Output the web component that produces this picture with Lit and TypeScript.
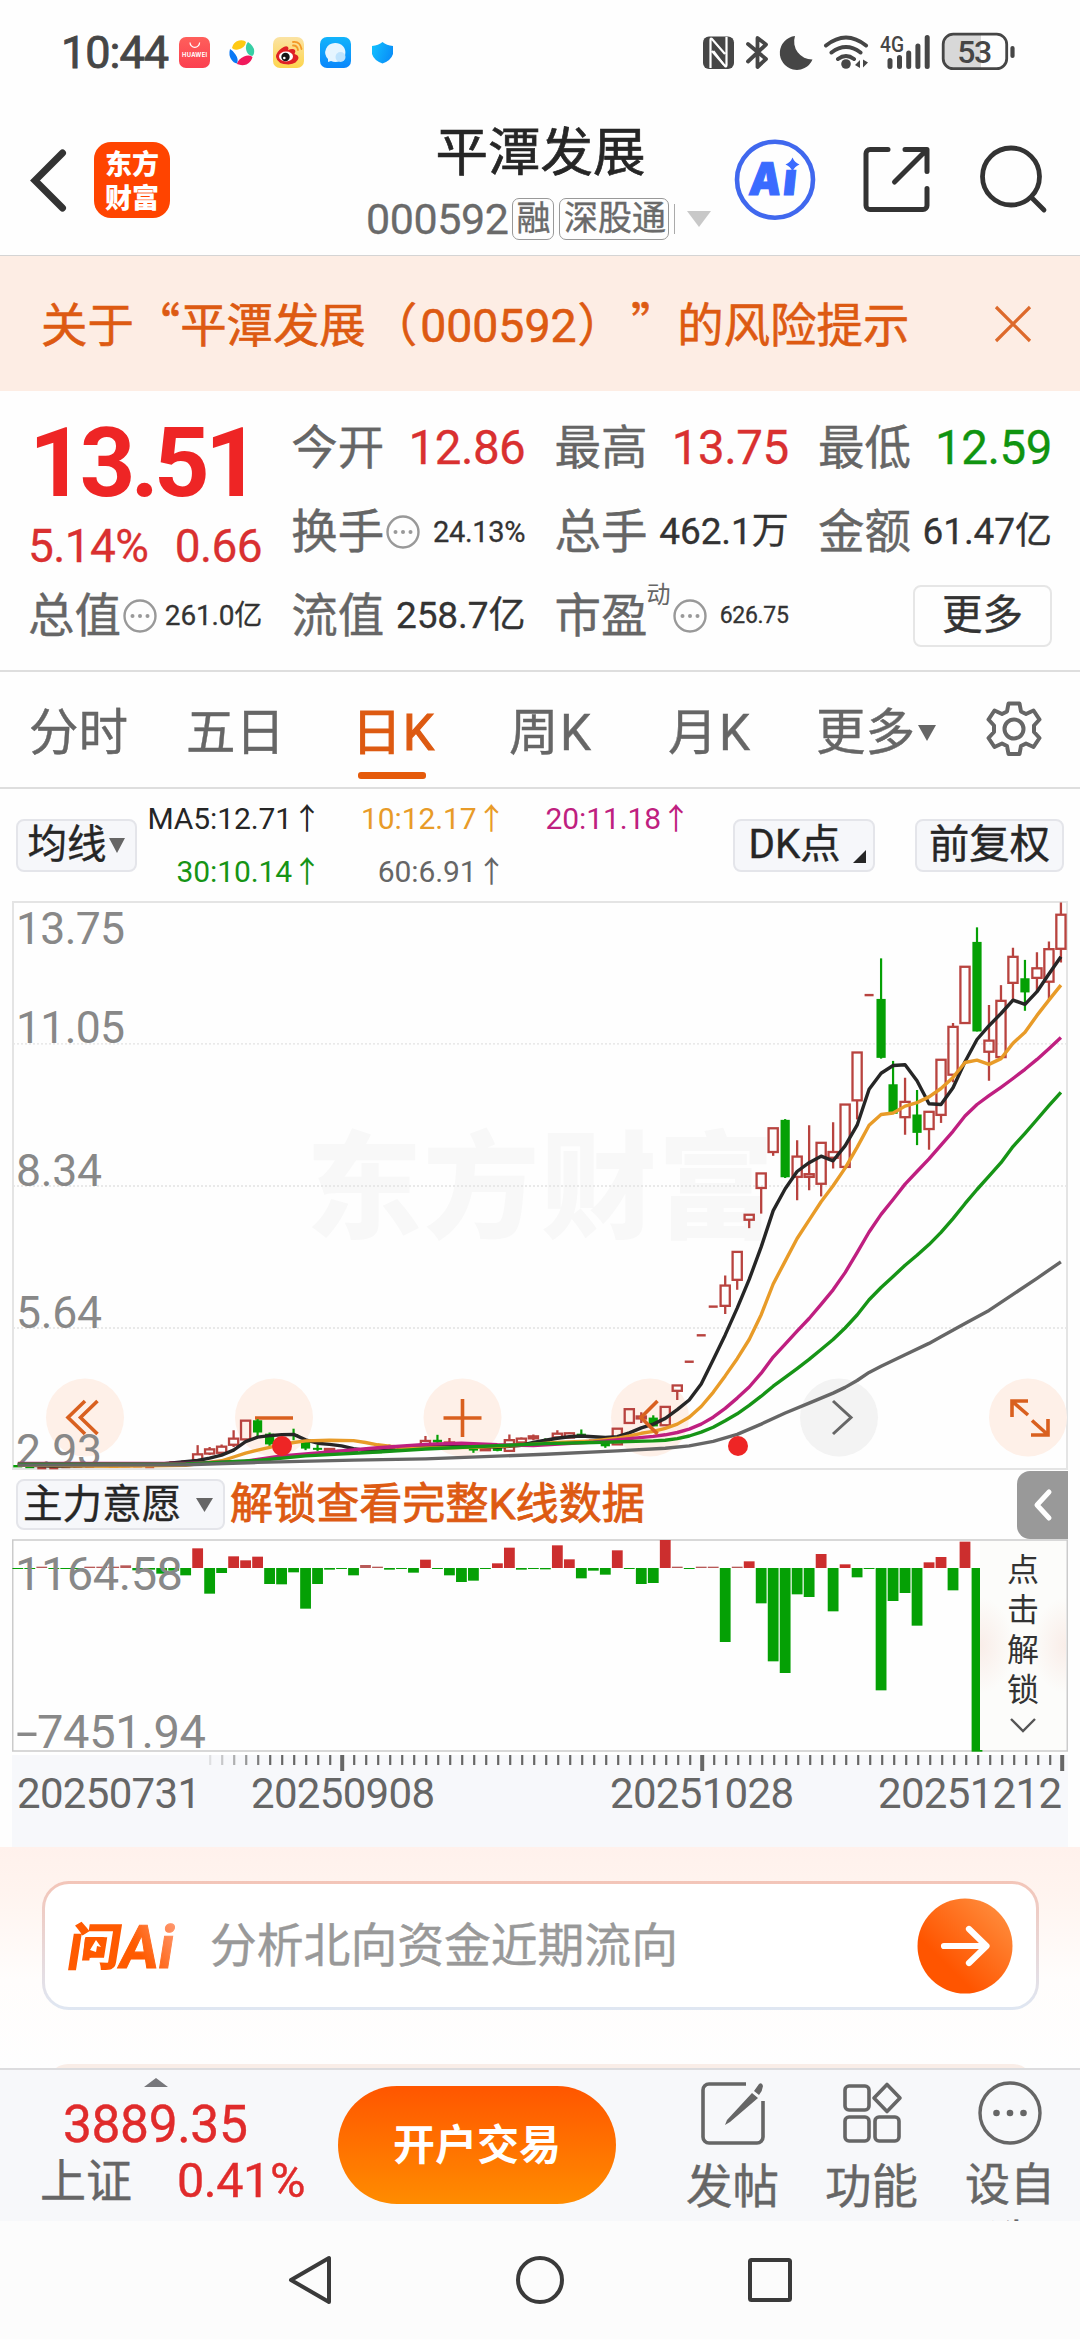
import { LitElement, html, svg, css } from "lit";
import { customElement } from "lit/decorators.js";

const FONT = css`Roboto, "Noto Sans CJK SC", sans-serif`;

/* ---------- chart data ---------- */
// Candles: [kind, high, bodyTop, bodyBottom, low]; r = rising, g = falling, d / e = flat.
type Candle = [string, number, number, number, number];
const flat = (v: number): Candle => ["d", v, v, v, v];
const flatG = (v: number): Candle => ["e", v, v, v, v];

const CANDLES: Candle[] = [
  flatG(1503), flatG(1505), flat(1508), flat(1508), flat(1505), flat(1504), flat(1504), flatG(1502),
  flat(1504), flat(1503), flat(1503), flat(1505), flat(1496), flat(1493), flat(1491),
  ["r", 1448, 1472, 1487, 1487], ["r", 1453, 1459, 1470, 1474], ["r", 1446, 1452, 1468, 1470],
  ["r", 1409, 1431, 1447, 1453], ["r", 1384, 1384, 1433, 1433], ["g", 1380, 1383, 1415, 1427],
  ["g", 1415, 1418, 1446, 1450], flat(1445), ["g", 1405, 1419, 1421, 1435],
  ["g", 1433, 1439, 1457, 1461], ["g", 1447, 1455, 1457, 1463], ["r", 1456, 1458, 1463, 1468],
  flat(1463), flatG(1465), flatG(1468), flatG(1466), ["r", 1446, 1456, 1461, 1462],
  flat(1457), flat(1452), ["r", 1424, 1437, 1446, 1446], ["g", 1421, 1434, 1441, 1443],
  ["r", 1429, 1441, 1444, 1446], flat(1446), ["g", 1455, 1457, 1460, 1468],
  ["r", 1455, 1456, 1461, 1462], ["g", 1452, 1453, 1463, 1464], ["r", 1420, 1435, 1463, 1466],
  ["r", 1428, 1431, 1441, 1446], ["r", 1420, 1425, 1430, 1435], ["g", 1430, 1434, 1439, 1441],
  ["r", 1409, 1418, 1428, 1430], ["r", 1415, 1417, 1428, 1430], ["g", 1407, 1418, 1421, 1424],
  flat(1436), ["g", 1439, 1441, 1451, 1455], ["r", 1405, 1405, 1446, 1446],
  ["r", 1354, 1354, 1390, 1390], ["r", 1362, 1373, 1378, 1390], ["g", 1370, 1376, 1399, 1399],
  ["r", 1348, 1348, 1396, 1396], ["r", 1292, 1292, 1306, 1330], flat(1230), flat(1161), flat(1086),
  ["r", 1005, 1031, 1084, 1105], ["r", 943, 943, 1016, 1042], ["r", 846, 846, 859, 881],
  ["r", 738, 738, 776, 843], ["r", 620, 620, 682, 692], ["g", 596, 598, 748, 750],
  ["r", 651, 694, 747, 808], ["r", 612, 740, 747, 782], ["r", 658, 658, 765, 798],
  ["r", 604, 682, 697, 725], ["r", 558, 558, 721, 721], ["r", 422, 422, 547, 597], flat(272),
  ["g", 176, 282, 436, 438], ["g", 444, 505, 582, 582], ["r", 488, 551, 591, 637],
  ["g", 520, 584, 632, 664], ["r", 577, 577, 622, 676], ["r", 441, 441, 585, 606],
  ["r", 345, 355, 480, 500], ["r", 198, 198, 345, 345], ["g", 95, 133, 367, 367],
  ["r", 298, 391, 420, 496], ["r", 246, 287, 434, 434], ["r", 148, 172, 240, 285],
  ["g", 180, 228, 265, 313], ["r", 160, 202, 227, 262], ["r", 132, 152, 237, 285],
  ["r", 30, 62, 151, 187],
];

// Moving averages: a sparse head of [index, value] pairs, then one value per candle from `from`.
interface Average { color: string; head: [number, number][]; from: number; tail: number[]; }
const AVERAGES: Average[] = [
  { color: "#262626", head: [[0, 1499], [3, 1503], [8, 1501], [12, 1497], [15, 1488]], from: 16,
    tail: [1482, 1474, 1461, 1439, 1427, 1423, 1421, 1420, 1434, 1443, 1446, 1450, 1457, 1462, 1463, 1462,
      1460, 1455, 1450, 1449, 1449, 1450, 1451, 1452, 1453, 1451, 1448, 1441, 1435, 1430, 1426, 1424, 1426,
      1428, 1426, 1416, 1403, 1393, 1378, 1355, 1330, 1288, 1225, 1160, 1090, 1015, 930, 835, 778, 733,
      710, 693, 705, 666, 612, 518, 476, 456, 454, 496, 556, 558, 514, 446, 388, 352, 320, 285, 296,
      263, 217, 172] },
  { color: "#e89b28", head: [[0, 1500], [8, 1503], [14, 1501], [17, 1489], [18, 1479], [19, 1469], [20, 1461],
      [21, 1454], [22, 1447], [23, 1441], [24, 1437], [26, 1435], [28, 1436], [29, 1441], [30, 1447],
      [31, 1451], [33, 1456], [38, 1454], [42, 1448], [45, 1441], [48, 1437], [50, 1430]], from: 51,
    tail: [1424, 1417, 1412, 1404, 1393, 1375, 1347, 1310, 1267, 1222, 1172, 1107, 1027, 967, 908, 860, 812,
      770, 724, 670, 612, 584, 580, 562, 553, 538, 516, 487, 448, 442, 453, 438, 398, 369, 325, 285, 246] },
  { color: "#bf1f80", head: [[0, 1496], [14, 1496], [19, 1490], [22, 1476], [26, 1466], [30, 1455], [34, 1446],
      [37, 1443], [40, 1447], [43, 1449], [48, 1440], [51, 1431]], from: 53,
    tail: [1425, 1421, 1415, 1406, 1393, 1375, 1352, 1325, 1296, 1260, 1218, 1184, 1150, 1117, 1080, 1042,
      997, 945, 891, 845, 806, 766, 733, 700, 664, 628, 588, 558, 535, 513, 490, 466, 440, 412, 383] },
  { color: "#169416", head: [[0, 1498], [14, 1497], [20, 1488], [24, 1476], [30, 1466], [34, 1458], [38, 1452],
      [44, 1444], [48, 1441]], from: 53,
    tail: [1437, 1435, 1431, 1424, 1414, 1401, 1384, 1366, 1344, 1320, 1294, 1271, 1248, 1224, 1198, 1172,
      1142, 1108, 1068, 1036, 1007, 978, 952, 924, 892, 856, 817, 780, 745, 710, 668, 633, 597, 561, 526] },
  { color: "#666666", head: [[0, 1500], [14, 1499], [20, 1493], [28, 1487], [34, 1484], [44, 1472], [50, 1463],
      [54, 1456], [56, 1450], [58, 1438], [60, 1420], [62, 1393], [64, 1364], [66, 1338], [68, 1312],
      [69, 1297], [70, 1279], [71, 1258], [72, 1242], [74, 1212], [76, 1182], [77, 1165], [79, 1130],
      [81, 1096], [83, 1054], [85, 1012], [87, 969]], from: 88, tail: [] },
];

const FLOWS = [
  -3, -3, 4, -2, -2, -2, 4, 4, 4, 8, -7, -5, -17, -8, -22, 59, -77, -15, 35, 23, 34, -48, -49, -13, -122,
  -48, -5, -2, -22, 9, 4, -5, -2, -14, 25, -3, -22, -42, -38, -3, 14, 61, -5, -2, -4, 68, 26, -31, -8,
  -20, 53, -3, -48, -45, 84, 4, -3, 4, 4, -222, 4, 20, -106, -280, -315, -79, -87, 42, -130, 11, -28, -3,
  -367, -99, -75, -173, 17, 33, -67, 79, -551,
];

const STEP = 11.99;
const cx = (i: number) => 5.8 + i * STEP;
const cy = (v: number) => v / 2.613 - 10;

const RED = "#b8433f";
const GREEN = "#05a005";

function candle([kind, hi, top, bottom, lo]: Candle, i: number) {
  const x = cx(i);
  if (kind === "d" || kind === "e") {
    return svg`<rect x=${x - 4.5} y=${cy(hi) - 1.2} width="9" height="2.4" fill=${kind === "d" ? RED : GREEN} />`;
  }
  if (kind === "g") {
    return svg`<rect x=${x - 1.1} y=${cy(hi)} width="2.2" height=${cy(lo) - cy(hi)} fill=${GREEN} />
      <rect x=${x - 4.6} y=${cy(top)} width="9.2" height=${Math.max(2, cy(bottom) - cy(top))} fill=${GREEN} />`;
  }
  return svg`<path d="M${x} ${cy(hi)}V${cy(top)}M${x} ${cy(bottom)}V${cy(lo)}" stroke=${RED} stroke-width="2.3" />
    <rect x=${x - 4.6} y=${cy(top)} width="9.2" height=${Math.max(2, cy(bottom) - cy(top))}
      fill="none" stroke=${RED} stroke-width="2.3" />`;
}

function averagePoints(a: Average) {
  const pts = [...a.head, ...a.tail.map((v, k) => [a.from + k, v] as [number, number])];
  return pts.map(([i, v]) => `${cx(i).toFixed(1)},${cy(v).toFixed(1)}`).join(" ");
}

/* ---------- status bar ---------- */
@customElement("status-bar")
class StatusBar extends LitElement {
  static styles = css`
    :host { display: flex; height: 100px; align-items: flex-start; padding: 0 62px 0 61px; font-family: ${FONT}; color: #464646; }
    .time { font-size: 45px; line-height: 46px; margin-top: 30px; width: 118px; letter-spacing: -1px; font-weight: 400; -webkit-text-stroke: 0.9px #464646; }
    .apps { margin-top: 36px; display: block; }
    .system { margin: 30px 0 0 auto; display: block; }
    .bold { font-family: ${FONT}; font-weight: 500; }
    .brand { font-family: Inter, sans-serif; font-weight: 700; }
  `;
  render() {
    return html`
      <div class="time">10:44</div>
      <svg class="apps" width="220" height="34" viewBox="179 36 220 34">
        <defs>
          <linearGradient id="msg" x1="0" y1="0" x2="0" y2="1"><stop offset="0" stop-color="#12b4fb" /><stop offset="1" stop-color="#0a86fb" /></linearGradient>
          <linearGradient id="wb" x1="0" y1="0" x2="0" y2="1"><stop offset="0" stop-color="#fbe3a4" /><stop offset="1" stop-color="#fdd54d" /></linearGradient>
          <linearGradient id="sh" x1="0" y1="0" x2="1" y2="0.4"><stop offset="0" stop-color="#12c3ff" /><stop offset="1" stop-color="#0a90f8" /></linearGradient>
          <linearGradient id="hw" x1="0" y1="0" x2="0" y2="1"><stop offset="0" stop-color="#ff5f5b" /><stop offset="1" stop-color="#fb4050" /></linearGradient>
        </defs>
        <rect x="179" y="37" width="31" height="31" rx="7" fill="url(#hw)" />
        <path d="M190 42.500a4.800 4.800 0 0 0 9.600 0" fill="none" stroke="#fff" stroke-width="1.200" />
        <text class="brand" x="194.600" y="57" text-anchor="middle" font-size="5.800" fill="#fff" textLength="25">HUAWEI</text>
        <path d="M232 48q1-6 7-7.500 5-1 7 1.500-1 6-8 7.500-4 1-6-1.500z" fill="#ffc913" />
        <path d="M248 42q6 4 6.200 9 0 4-2 5-5-1-6-6-1-5 1.800-8z" fill="#37cfa5" />
        <path d="M252.500 57q-1 5-6 7.500-5 1.500-9.500-.5 1-5 7-7.500 5-2 8.500.5z" fill="#f01a5c" />
        <path d="M230 49q-1.500 6 1 10 2.500 4 6 4.500 2-4-1.500-9-2.500-4-5.500-5.500z" fill="#0a78f5" />
        <rect x="273" y="37" width="31" height="31" rx="7" fill="url(#wb)" />
        <path d="M276 57q0-5 6-9 4-3 6-1 1 1.500 0 3 5-2 7 0 1 1-.5 4 4 1 4 4-1 5.500-10 6.500-11 0-12.500-7.500z" fill="#df2024" />
        <ellipse cx="286" cy="56.500" rx="7" ry="5" fill="#fff" /><circle cx="285.500" cy="57" r="4.200" fill="#161616" /><circle cx="284.300" cy="58" r="1.300" fill="#fff" />
        <path d="M293 42q7-1 8.500 7M293 45.500q4.200-.2 5 4.500" fill="none" stroke="#f39a28" stroke-width="1.800" stroke-linecap="round" />
        <rect x="320" y="37" width="31" height="31" rx="7" fill="url(#msg)" />
        <path d="M335 43a10 9.500 0 1 1-4 18l-3 1v-3a10 9.500 0 0 1 7-16z" fill="#e6f5ff" />
        <circle cx="340.500" cy="57" r="5" fill="#bfe3fd" />
        <path d="M382.500 42q4 3.500 10.500 4v8q-2 6.500-10.500 9.500-8.500-3-10.500-9.500v-8q6.500-.5 10.500-4z" fill="url(#sh)" />
      </svg>
      <svg class="system" width="315" height="44" viewBox="703 30 315 44" fill="none">
        <rect x="703" y="36.500" width="31" height="32.500" rx="6" fill="#464646" />
        <path d="M710.500 68V40q0-2 1.500-1l13 15M726.500 37v28q0 2-1.500 1l-13-15" stroke="#fff" stroke-width="2.200" />
        <path d="M713.500 51l10.500 14" stroke="#fff" stroke-width="2" />
        <path d="M748 44l18 15-8.500 8V38l8.500 6.500L748 61.500" stroke="#464646" stroke-width="3.800" stroke-linejoin="round" stroke-linecap="round" />
        <path d="M795 36a17 17 0 1 0 17.500 23.500A18 18 0 0 1 795 36z" fill="#464646" />
        <path d="M826 45.500q20-16 40 0M831.500 52.500q14.500-11 29 0M838 59q8-6 16 0" stroke="#464646" stroke-width="4" stroke-linecap="round" />
        <circle cx="846" cy="64" r="4.800" fill="#464646" />
        <path d="M855 65l5-5v8zM868 62.500l-5 5v-8z" fill="#464646" />
        <text class="bold" x="880" y="51.500" font-size="22" fill="#464646" textLength="24" lengthAdjust="spacingAndGlyphs">4G</text>
        <path d="M890 60.500v6M899.500 57.500v9M908.700 53v13.500M917.900 46v20.500M927.200 37.500v29" stroke="#464646" stroke-width="5" stroke-linecap="round" />
        <path d="M950 35h31v33h-31a6 6 0 0 1-6-6V41a6 6 0 0 1 6-6z" fill="#d8d8d8" />
        <rect x="943.200" y="34.200" width="63.500" height="34.500" rx="10" stroke="#464646" stroke-width="2.800" />
        <path d="M1012.500 48v8" stroke="#464646" stroke-width="4.200" stroke-linecap="round" />
        <text class="bold" x="974.700" y="63" text-anchor="middle" font-size="32" fill="#464646" textLength="35" lengthAdjust="spacing">53</text>
      </svg>`;
  }
}

/* ---------- title bar ---------- */
@customElement("stock-header")
class StockHeader extends LitElement {
  static styles = css`
    :host { display: grid; grid-template-columns: 367px 345px 368px; height: 155px; border-bottom: 1px solid #d4d4d4; font-family: ${FONT}; }
    .left { display: flex; padding: 42px 0 0 29px; align-items: flex-start; }
    .back { display: block; margin-top: 4px; }
    .logo { width: 76px; height: 76px; border-radius: 17px; background: #ff4400; margin-left: 25px; color: #fff; font: 900 27px/34px "Noto Sans CJK SC", sans-serif; display: flex; flex-direction: column; align-items: center; justify-content: center; }
    .center { display: flex; flex-direction: column; }
    .name { font-size: 52.500px; line-height: 60px; margin-top: 23px; text-align: center; color: #262626; -webkit-text-stroke: 0.7px #262626; padding-left: 2px; }
    .sub { display: flex; align-items: center; height: 45px; margin-top: 13px; color: #6a6a6a; }
    .code { font-size: 43px; line-height: 44px; width: 145px; letter-spacing: -0.4px; margin-left: -1px; margin-right: 1px; -webkit-text-stroke: 0.3px #6a6a6a; }
    .badge { box-sizing: border-box; height: 42px; border: 1.500px solid #999; border-radius: 7px; font-size: 34px; line-height: 38px; text-align: center; white-space: nowrap; -webkit-text-stroke: 0.4px #6a6a6a; }
    .one { width: 42px; padding-left: 1px; }
    .three { width: 110px; margin-left: 5px; padding-left: 2px; }
    .rule { width: 1px; height: 30px; background: #aaa; margin: 0 11px 0 5px; }
    .right { display: block; }
    .ai { font-family: Inter, sans-serif; font-weight: 900; }
  `;
  render() {
    return html`
      <div class="left">
        <svg class="back" width="40" height="68" viewBox="0 0 40 68" fill="none"><path d="M33.500 7L6 34.500 33.500 62" stroke="#333" stroke-width="7" stroke-linecap="round" /></svg>
        <div class="logo"><span>东方</span><span>财富</span></div>
      </div>
      <div class="center">
        <div class="name">平潭发展</div>
        <div class="sub">
          <span class="code">000592</span><span class="badge one">融</span><span class="badge three">深股通</span>
          <span class="rule"></span>
          <svg width="26" height="18" viewBox="0 0 26 18"><path d="M1 1h24L13 17z" fill="#c8c8c8" /></svg>
        </div>
      </div>
      <svg class="right" width="368" height="155" viewBox="712 100 368 155" fill="none">
        <circle cx="775" cy="179.700" r="38" stroke="#4068ee" stroke-width="4.600" />
        <g transform="translate(0 194.500) skewX(-6)">
          <text class="ai" y="0" font-size="45" fill="#3a6bff" stroke="#3a6bff" stroke-width="1.200"><tspan x="748" textLength="32" lengthAdjust="spacingAndGlyphs">A</tspan><tspan x="782">ı</tspan></text>
        </g>
        <path d="M792.500 157.500q2 5 7 7-5 2-7 7-2-5-7-7 5-2 7-7z" fill="#3a6bff" />
        <path d="M888 149.500h-18a4 4 0 0 0-4 4v52a4 4 0 0 0 4 4h53a4 4 0 0 0 4-4V188.500M905 149.500h22v22M894.500 182l31-31" stroke="#333" stroke-width="5" stroke-linecap="round" stroke-linejoin="round" />
        <circle cx="1011" cy="176.500" r="28.500" stroke="#333" stroke-width="4.800" />
        <path d="M1031.500 197.500l12.500 12.500" stroke="#333" stroke-width="4.800" stroke-linecap="round" />
      </svg>`;
  }
}

/* ---------- risk notice ---------- */
@customElement("risk-notice")
class RiskNotice extends LitElement {
  static styles = css`
    :host { display: flex; align-items: center; justify-content: space-between; box-sizing: border-box; height: 135px; padding: 0 48px 0 41px; background: #fdede4; color: #dd5a12; font: 46.400px/60px ${FONT}; }
    .wide { font-family: "Noto Sans CJK SC", sans-serif; }
    .close { margin-left: 7px; }
    .code { margin: 0 1px 0 3px; }
    .paren { margin-left: 5px; }
    .text { white-space: nowrap; text-spacing-trim: space-all; -webkit-text-stroke: 0.6px #dd5a12; }
  `;
  render() {
    return html`
      <div class="text">关于<span class="wide">“</span>平潭发展<span class="paren">（</span><span class="code">000592</span>）<span class="wide close">”</span>的风险提示</div>
      <svg width="38" height="38" viewBox="0 0 38 38"><path d="M2 2l34 34M36 2L2 36" stroke="#dd6a2c" stroke-width="3.200" /></svg>`;
  }
}

/* ---------- quote ---------- */
@customElement("quote-panel")
class QuotePanel extends LitElement {
  static styles = css`
    :host { display: grid; box-sizing: border-box; height: 281px; grid-template-columns: repeat(4, 234px); column-gap: 29.300px; grid-template-rows: repeat(3, 84px); padding: 14px 28px 0; border-bottom: 2px solid #dedede; font: 46.500px/50px ${FONT}; color: #333; white-space: nowrap; }
    .last { grid-row: span 2; color: #ee2525; }
    .price { font-weight: 700; font-size: 97px; line-height: 100px; letter-spacing: -4.800px; margin: 8px 0 0 1px; }
    .change { display: flex; justify-content: space-between; font-size: 46px; line-height: 50px; margin-top: 8px; color: #d93030; letter-spacing: -0.600px; -webkit-text-stroke: 0.3px #d93030; }
    .cell { display: flex; align-items: center; padding-top: 1px; }
    .label { color: #666; -webkit-text-stroke: 0.4px #666; }
    .value { margin-left: auto; -webkit-text-stroke: 0.3px currentColor; }
    .info { display: block; margin-left: 2px; }
    .sup { align-self: flex-start; font-size: 24px; line-height: 24px; margin: 9px 0 0 -1px; color: #666; }
    .up { color: #d93030; } .down { color: #109410; }
    .s48 { font-size: 47.500px; letter-spacing: -0.500px; } .s37 { font-size: 37px; letter-spacing: -0.100px; } .s29 { font-size: 29px; letter-spacing: -0.300px; } .s28 { font-size: 28px; letter-spacing: -0.200px; } .s23 { font-size: 23px; letter-spacing: -0.300px; }
    .more { box-sizing: border-box; margin-left: auto; width: 139px; height: 62px; border: 2px solid #e6e6e6; border-radius: 8px; text-align: center; font-size: 40.500px; line-height: 56px; -webkit-text-stroke: 0.4px #333; }
  `;
  private info() {
    return html`<svg class="info" width="34" height="34" viewBox="0 0 34 34"><circle cx="17" cy="17" r="15.500" fill="none" stroke="#999" stroke-width="2.400" /><g fill="#999"><circle cx="9.500" cy="17" r="2" /><circle cx="17" cy="17" r="2" /><circle cx="24.500" cy="17" r="2" /></g></svg>`;
  }
  render() {
    const cell = (label: string, value: string, cls: string, info = false) => html`
      <div class="cell"><span class="label">${label}</span>${info ? this.info() : ""}<span class="value ${cls}">${value}</span></div>`;
    return html`
      <div class="last"><div class="price">13.51</div><div class="change"><span>5.14%</span><span>0.66</span></div></div>
      ${cell("今开", "12.86", "s48 up")}${cell("最高", "13.75", "s48 up")}${cell("最低", "12.59", "s48 down")}
      ${cell("换手", "24.13%", "s29", true)}${cell("总手", "462.1万", "s37")}${cell("金额", "61.47亿", "s37")}
      ${cell("总值", "261.0亿", "s28", true)}${cell("流值", "258.7亿", "s37")}
      <div class="cell"><span class="label">市盈</span><span class="sup">动</span>${this.info()}<span class="value s23">626.75</span></div>
      <div class="cell"><div class="more">更多</div></div>`;
  }
}

/* ---------- period tabs ---------- */
@customElement("period-tabs")
class PeriodTabs extends LitElement {
  static styles = css`
    :host { display: grid; box-sizing: border-box; height: 117px; grid-template-columns: 157px 166px 157px 159px 148px 169px 60px; padding-left: 29px; border-bottom: 2px solid #dedede; font: 49.500px/60px ${FONT}; color: #666; white-space: nowrap; -webkit-text-stroke: 0.4px #666; }
    .tab { padding-top: 31px; }
    .k { letter-spacing: 1.500px; }
    .active { color: #dd5a12; -webkit-text-stroke: 1.200px #dd5a12; }
    .active::after { content: ""; display: block; width: 68px; height: 7px; border-radius: 3px; background: #e55a0a; margin: 9px 0 0 6px; }
    .more { display: flex; align-items: center; padding-bottom: 26px; }
    .gear { display: block; margin-top: 27px; }
  `;
  render() {
    const teeth = "M23.500 3h11l1.500 8 5 2.500 7.500-3.500 6 9-5.500 6v6.500l5.500 6-6 9-7.500-3.500-5 2.500-1.500 8h-11l-1.500-8-5-2.500-7.500 3.500-6-9 5.500-6V25l-5.500-6 6-9 7.500 3.500 5-2.500z";
    return html`
      <div class="tab">分时</div><div class="tab">五日</div><div class="tab k active">日K</div><div class="tab k">周K</div><div class="tab k">月K</div>
      <div class="tab more">更多<svg width="22" height="18" viewBox="-2 -1 22 18"><path d="M1 0h18L10 16z" fill="#666" /></svg></div>
      <svg class="gear" width="58" height="60" viewBox="0 0 58 60" fill="none" stroke="#666" stroke-width="4"><path d=${teeth} stroke-linejoin="round" transform="translate(0 1.500)" /><circle cx="29" cy="30" r="9.500" /></svg>`;
  }
}

/* ---------- indicator toolbar ---------- */
@customElement("indicator-bar")
class IndicatorBar extends LitElement {
  static styles = css`
    :host { display: flex; height: 112px; font: 40.300px/50px ${FONT}; color: #262626; white-space: nowrap; }
    .btn { box-sizing: border-box; height: 53px; margin-top: 30px; border: 2px solid #e4e5ea; border-radius: 8px; background: #f6f7fa; display: flex; align-items: center; justify-content: center; line-height: 46px; flex: none; -webkit-text-stroke: 0.4px #262626; padding-bottom: 2px; }
    .ma { width: 121px; margin-left: 16px; font-size: 39.500px; }
    .ma svg { margin: 2px 0 0 1px; }
    .legend { display: grid; grid-template-columns: 185px 184.500px 184.500px; grid-template-rows: 53px 53px; padding-top: 3px; font-size: 30px; line-height: 53px; text-align: right; letter-spacing: -0.100px; }
    .dk { width: 142px; margin-left: 42px; }
    .dk svg { margin: 24px -6px 0 12px; }
    .fq { width: 149px; margin-left: 40px; }
    .c5 { color: #262626; } .c10 { color: #e89b28; } .c20 { color: #bf1f80; } .c30 { color: #169416; } .c60 { color: #666; }
  `;
  render() {
    return html`
      <div class="btn ma">均线<svg width="18" height="16" viewBox="0 0 18 16"><path d="M1 0h16L9 15z" fill="#666" /></svg></div>
      <div class="legend">
        <span class="c5">MA5:12.71↑</span><span class="c10">10:12.17↑</span><span class="c20">20:11.18↑</span>
        <span class="c30">30:10.14↑</span><span class="c60">60:6.91↑</span>
      </div>
      <div class="btn dk">DK点<svg width="13" height="13" viewBox="0 0 13 13"><path d="M13 0v13H0z" fill="#262626" /></svg></div>
      <div class="btn fq">前复权</div>`;
  }
}

/* ---------- candlestick chart ---------- */
@customElement("k-chart")
class KChart extends LitElement {
  static styles = css`
    :host { display: block; height: 569px; padding: 0 12px; }
    .canvas { display: block; }
    .axis { font: 44.500px ${FONT}; fill: #888; }
    .mark { font: 900 116px "Noto Sans CJK SC", sans-serif; fill: #f8f8f8; }
  `;
  render() {
    const labels: [string, number][] = [["13.75", 43], ["11.05", 142], ["8.34", 284.5], ["5.64", 426.5], ["2.93", 564.5]];
    const buttons: [number, string][] = [[73, "#fef0e8"], [262, "#fef0e8"], [450.5, "#fef0e8"], [638, "#fef0e8"], [827, "#f3f3f3"], [1016, "#fef0e8"]];
    return html`<svg class="canvas" width="1056" height="569" viewBox="0 0 1056 569" fill="none">
      <text class="mark" x="294" y="328" textLength="468">东方财富</text>
      ${[142.8, 285, 427].map((y) => svg`<path d="M1 ${y}H1055" stroke="#e2e2e2" stroke-width="1.300" stroke-dasharray="2 2" />`)}
      <rect x="1" y="1" width="1054" height="567" stroke="#e4e4e4" stroke-width="2" />
      ${buttons.map(([x, c]) => svg`<circle cx=${x} cy="516.500" r="39" fill=${c} />`)}
      <g stroke="#d9601f" stroke-width="3.600">
        <path d="M73 500L56 516.500l17 16.500M85.500 500L68.500 516.500l17 16.500" />
        <path d="M243 517h38M431.500 517h38M450.500 498v38" />
        <path d="M1000 516v-16h16M1001 501l15 13M1036 518v16h-17M1035 533l-15-13.500" />
      </g>
      ${CANDLES.map(candle)}
      ${labels.map(([t, y]) => svg`<text class="axis" x="4" y=${y} textLength=${t.length === 5 ? 109 : 86}>${t}</text>`)}
      ${AVERAGES.map((a) => svg`<polyline points=${averagePoints(a)} stroke=${a.color} stroke-width="3.400" stroke-linejoin="round" />`)}
      <path d="M645.500 500L629 516.500l16.500 16.500" stroke="#d9601f" stroke-width="3.600" />
      <path d="M821 500l18 16.500-18 16.500" stroke="#666" stroke-width="3" />
      <circle cx="270" cy="545" r="10" fill="#ee2525" /><circle cx="726" cy="545" r="10" fill="#ee2525" />
    </svg>`;
  }
}

/* ---------- fund flow chart ---------- */
@customElement("flow-chart")
class FlowChart extends LitElement {
  static styles = css`
    :host { display: block; padding: 0 12px; font-family: ${FONT}; }
    .bar { display: flex; height: 69px; align-items: center; padding-left: 4px; }
    .pick { box-sizing: border-box; width: 209px; height: 51px; border: 2px solid #e4e5ea; border-radius: 8px; background: #f6f7fa; display: flex; align-items: center; justify-content: space-between; padding: 0 9px 0 5px; font-size: 39.600px; line-height: 46px; color: #262626; -webkit-text-stroke: 0.4px #262626; }
    .unlock { font-size: 43.100px; line-height: 50px; color: #dd5a12; margin-left: 5px; -webkit-text-stroke: 0.8px #dd5a12; }
    .fold { width: 51px; height: 68px; margin-left: auto; background: #999; border-radius: 13px 0 0 13px; display: flex; align-items: center; justify-content: center; }
    .canvas { display: block; }
    .axis { font: 47px ${FONT}; fill: #888; }
    .plot { display: grid; grid-template-columns: 968px 88px; height: 213px; }
    .plot > * { grid-row: 1; }
    .canvas { grid-column: 1 / 3; }
    .gate { grid-column: 2; margin: 2px 2px 2px 0; padding-top: 9px; box-sizing: border-box; display: flex; flex-direction: column; align-items: center; font-size: 32px; line-height: 40px; color: #333; position: relative;
      background: radial-gradient(ellipse 34px 48px at 0% 50%, #f9ede8, transparent), radial-gradient(ellipse 34px 48px at 100% 50%, #f9ede8, transparent), #fcfcfa; }
    .gate svg { margin-top: 7px; }
    .dates { height: 95px; background: #f7f8fb; }
    .date { font: 42px ${FONT}; fill: #666; }
  `;
  render() {
    const dates: [string, number][] = [["20250731", 5], ["20250908", 239], ["20251028", 598], ["20251212", 866]];
    const ticks = Array.from({ length: 72 }, (_, k) => k + 16);
    return html`
      <div class="bar">
        <div class="pick"><span>主力意愿</span><svg width="18" height="16" viewBox="0 0 18 16"><path d="M0 1h17L8.500 15z" fill="#666" /></svg></div>
        <div class="unlock">解锁查看完整K线数据</div>
        <div class="fold"><svg width="20" height="34" viewBox="0 0 20 34" fill="none"><path d="M16 4L4 17l12 13" stroke="#fff" stroke-width="5" stroke-linecap="round" stroke-linejoin="round" /></svg></div>
      </div>
      <div class="plot">
        <svg class="canvas" width="1056" height="213" viewBox="0 0 1056 213" fill="none">
          <rect x="0.750" y="1" width="1054.500" height="211" stroke="#cbcbcb" stroke-width="1.500" />
          ${FLOWS.map((v, i) => {
            const h = Math.abs(v) / 3;
            return svg`<rect x=${cx(i) - 5.4} y=${v > 0 ? 29 - h : 29} width="10.8" height=${Math.max(h, 1)} fill=${v > 0 ? (v < 10 ? "#b85a58" : "#cc2e2e") : GREEN} />`;
          })}
          <text class="axis" x="3" y="50.500" textLength="168">1164.58</text>
          <text class="axis" x="4" y="209"><tspan textLength="22" lengthAdjust="spacingAndGlyphs">-</tspan><tspan x="25" textLength="169">7451.94</tspan></text>
        </svg>
        <div class="gate"><span>点</span><span>击</span><span>解</span><span>锁</span><svg width="28" height="18" viewBox="0 0 28 18" fill="none"><path d="M2 2l12 12L26 2" stroke="#555" stroke-width="2.400" /></svg></div>
      </div>
      <svg class="canvas dates" width="1056" height="95" viewBox="0 -2 1056 95" fill="none">
        <path d="M0-2H1056V1H0z" fill="#fff" />
        ${ticks.map((i) => {
          const major = (i - 27) % 30 === 0;
          return svg`<path d="M${6.2 + i * 12} 1V${major ? 17 : 11}" stroke="#666" stroke-width=${major ? 4 : 2.2} opacity=${Math.min(1, (i - 15) / 6)} />`;
        })}
        ${dates.map(([t, x]) => svg`<text class="date" x=${x} y="54" textLength="184">${t}</text>`)}
      </svg>`;
  }
}

/* ---------- ask box ---------- */
@customElement("ask-box")
class AskBox extends LitElement {
  static styles = css`
    :host { display: block; box-sizing: border-box; height: 221px; padding: 34px 41px 0 42px; background: linear-gradient(#fff1ec, #fff4ef 20%, #fffdfc 60%, #fefefe); overflow: hidden; }
    .card { box-sizing: border-box; height: 129px; border: 3px solid transparent; border-radius: 27px; background: linear-gradient(#fff, #fff) padding-box, linear-gradient(#f3c5b8, #dfe7f3) border-box; display: flex; align-items: center; padding: 0 23px 0 21px; }
    .mark { display: block; }
    .cn { font: 700 50px "Noto Sans CJK SC", sans-serif; }
    .en { font: 700 60px Roboto, sans-serif; }
    .hint { font: 46.800px/60px ${FONT}; color: #999; margin-left: 32px; -webkit-text-stroke: 0.4px #999; }
    .go { display: block; margin-left: auto; }
    .peek { height: 20px; margin: 54px 6px 0; border-radius: 27px 27px 0 0; background: #f9ede7; }
  `;
  render() {
    return html`
      <div class="card">
        <svg class="mark" width="112" height="56" viewBox="66 1918 112 56">
          <defs><linearGradient id="ask" gradientUnits="userSpaceOnUse" x1="138" y1="-14" x2="170" y2="-38"><stop offset="0" stop-color="#ff5a00" /><stop offset="1" stop-color="#ff9468" /></linearGradient></defs>
          <g transform="translate(0 1969) skewX(-9)">
            <text class="cn" x="65" y="-4" fill="#ff5a00" stroke="#ff5a00" stroke-width="1.500" textLength="53" lengthAdjust="spacingAndGlyphs">问</text>
            <text class="en" x="117" y="-1" fill="url(#ask)" stroke="url(#ask)" stroke-width="1" textLength="54" lengthAdjust="spacingAndGlyphs">Ai</text>
          </g>
          <path d="M86 1937h16q4 0 3.500 4l-1.500 10q-.5 3-4 3h-5l-5 4-1-4h-3q-3 0-2.500-3l1-10q.5-4 1.500-4z" fill="#ff5a00" />
          <path d="M90 1950l6-10 5 7-4-1-1 6z" fill="#fff" />
        </svg>
        <div class="hint">分析北向资金近期流向</div>
        <svg class="go" width="96" height="96" viewBox="0 0 96 96" fill="none">
          <defs><linearGradient id="go" x1="0.300" y1="0.700" x2="0.900" y2="0.100"><stop offset="0" stop-color="#ff5500" /><stop offset="1" stop-color="#ff8c3c" /></linearGradient></defs>
          <circle cx="48" cy="48" r="47.500" fill="url(#go)" />
          <path d="M27 48h42M52 31l17.500 17L52 65" stroke="#fff" stroke-width="6.200" stroke-linecap="round" stroke-linejoin="round" />
        </svg>
      </div>
      <div class="peek"></div>`;
  }
}

/* ---------- bottom bar ---------- */
@customElement("trade-bar")
class TradeBar extends LitElement {
  static styles = css`
    :host { display: grid; box-sizing: border-box; grid-template-columns: 338px 278px 47px 139px 139px 138px; height: 153px; overflow: hidden; background: #f7f8fa; border-top: 2px solid #dcdcde; font: 46.500px/54px ${FONT}; color: #666; -webkit-text-stroke: 0.4px #666; }
    .index { display: flex; flex-direction: column; }
    .caret { display: block; margin: 8px 0 0 144px; }
    .point { font-size: 51.500px; line-height: 56px; margin: 10px 0 0 63px; color: #e02b2b; letter-spacing: -0.400px; -webkit-text-stroke: 0.4px #e02b2b; }
    .row { display: flex; margin: 1px 0 0 40px; font-size: 46px; }
    .pct { color: #e02b2b; font-size: 48.500px; margin-left: 45px; letter-spacing: -0.400px; -webkit-text-stroke: 0.4px #e02b2b; }
    .trade { height: 118px; margin-top: 16px; border-radius: 59px; background: linear-gradient(#ff5600, #ff8c00); color: #fff; font-size: 42px; font-weight: 700; line-height: 120px; text-align: center; -webkit-text-stroke: 0; }
    .act { display: flex; flex-direction: column; align-items: center; padding-top: 11px; }
    .act svg { display: block; flex: none; }
    .cap { margin-top: 15px; width: 96px; text-align: center; line-height: 54px; flex: none; }
    .low { margin-top: 12px; width: 92px; font-size: 45px; line-height: 57px; }
  `;
  render() {
    return html`
      <div class="index">
        <svg class="caret" width="24" height="9" viewBox="0 0 24 9"><path d="M0 9L12 0l12 9z" fill="#77777b" /></svg>
        <div class="point">3889.35</div>
        <div class="row"><span>上证</span><span class="pct">0.41%</span></div>
      </div>
      <div class="trade">开户交易</div>
      <div></div>
      <div class="act">
        <svg width="64" height="64" viewBox="0 0 64 64" fill="none"><path d="M45 3H8a6 6 0 0 0-6 6v47a6 6 0 0 0 6 6h48a6 6 0 0 0 6-6V20" stroke="#666" stroke-width="3.600" /><path d="M51 12l6 5-28 24-5 3 2-5zM53 10l5-7q3-2 4 2-.5 5-4 9z" fill="#666" /></svg>
        <div class="cap">发帖</div>
      </div>
      <div class="act">
        <svg width="64" height="64" viewBox="0 0 64 64" fill="none" stroke="#666" stroke-width="3.600"><rect x="5" y="5" width="24" height="24" rx="4" /><rect x="5" y="36" width="24" height="24" rx="4" /><rect x="35" y="36" width="24" height="24" rx="4" /><path d="M47 3.500L60 17 47 30.500 34 17z" stroke-linejoin="round" /></svg>
        <div class="cap">功能</div>
      </div>
      <div class="act">
        <svg width="64" height="64" viewBox="0 0 64 64" fill="none"><circle cx="32" cy="32" r="30" stroke="#666" stroke-width="3.400" /><g fill="#666"><circle cx="18.500" cy="32" r="3.300" /><circle cx="32" cy="32" r="3.300" /><circle cx="45.500" cy="32" r="3.300" /></g></svg>
        <div class="cap low">设自选</div>
      </div>`;
  }
}

@customElement("app-root")
class AppRoot extends LitElement {
  static styles = css`
    :host { display: block; width: 1080px; height: 2340px; overflow: hidden; background: #fefefe; }
    .nav { height: 118px; background: #fcfcfc; display: flex; justify-content: center; gap: 182px; align-items: center; }
  `;
  render() {
    return html`
      <status-bar></status-bar>
      <stock-header></stock-header>
      <risk-notice></risk-notice>
      <quote-panel></quote-panel>
      <period-tabs></period-tabs>
      <indicator-bar></indicator-bar>
      <k-chart></k-chart>
      <flow-chart></flow-chart>
      <ask-box></ask-box>
      <trade-bar></trade-bar>
      <div class="nav">
        <svg width="48" height="52" viewBox="0 0 48 52" fill="none" stroke="#3a3a3a" stroke-width="4" stroke-linejoin="round"><path d="M43 4v44L5 26z" /></svg>
        <svg width="48" height="52" viewBox="0 0 48 52" fill="none" stroke="#3a3a3a" stroke-width="4"><circle cx="24" cy="26" r="22" /></svg>
        <svg width="48" height="52" viewBox="0 0 48 52" fill="none" stroke="#3a3a3a" stroke-width="4"><rect x="4" y="6" width="40" height="40" rx="1.500" /></svg>
      </div>`;
  }
}
